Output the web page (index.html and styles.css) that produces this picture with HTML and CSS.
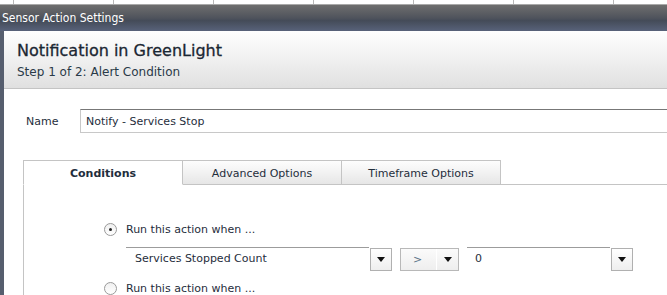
FILE: index.html
```html
<!DOCTYPE html>
<html>
<head>
    <title>Sensor Action Settings</title>
    <link rel="stylesheet" href="styles.css">
</head>
<body>
    <div class="grid-strip">
        <div class="cell first"></div>
        <div class="cell"></div>
        <div class="cell"></div>
        <div class="cell"></div>
        <div class="cell"></div>
        <div class="cell"></div>
        <div class="cell"></div>
    </div>
    <div class="titlebar">Sensor Action Settings</div>
    <div class="window">
        <div class="header">
            <h1>Notification in GreenLight</h1>
            <div class="step">Step 1 of 2: Alert Condition</div>
        </div>
        <div class="name-row">
            <label for="name">Name</label>
            <input type="text" id="name" value="Notify - Services Stop" />
        </div>
        <div class="tabs">
            <div class="tab active">Conditions</div>
            <div class="tab">Advanced Options</div>
            <div class="tab">Timeframe Options</div>
            <div class="tab-rest"></div>
        </div>
        <div class="tab-body">
            <div class="radio-row">
                <span class="radio checked"></span>
                <span>Run this action when ...</span>
            </div>
            <div class="cond-row">
                <div class="combo metric">
                    <span class="combo-text">Services Stopped Count</span>
                </div>
                <div class="arrow-btn"><span class="tri"></span></div>
                <div class="op-select">
                    <span class="op-text">&gt;</span>
                    <span class="op-arrow"><span class="tri"></span></span>
                </div>
                <div class="combo value">
                    <span class="combo-text">0</span>
                </div>
                <div class="arrow-btn"><span class="tri"></span></div>
            </div>
            <div class="radio-row">
                <span class="radio"></span>
                <span>Run this action when ...</span>
            </div>
        </div>
    </div>
</body>
</html>
```

FILE: styles.css
```css
body {
    margin: 0;
    width: 667px;
    height: 295px;
    overflow: hidden;
    background-color: #fff;
    font-family: "DejaVu Sans", sans-serif;
    font-size: 11px;
    color: #1f2e3c;
}

.grid-strip {
    display: flex;
    height: 4px;
    border-bottom: 1px solid #a9a9a9;
    background-color: #fff;
}

.cell {
    flex: 0 0 99px;
    border-right: 1px solid #b8b8b8;
}

.cell.first {
    flex-basis: 13px;
}

.titlebar {
    height: 26px;
    line-height: 26px;
    padding-left: 2px;
    color: #fff;
    font-family: "DejaVu Sans Condensed", "DejaVu Sans", sans-serif;
    font-size: 12px;
    background: linear-gradient(#6e6e6e, #4f535c 50%, #444b58 60%, #58627a);
}

.window {
    border-left: 4px solid #565e6e;
    height: 264px;
    overflow: hidden;
}

.header {
    height: 58px;
    padding: 10px 0 0 13px;
    box-sizing: border-box;
    background: linear-gradient(#fefefe, #f0f0f0 50%, #e0e0e0);
    border-bottom: 1px solid #c4c4c4;
}

h1 {
    margin: 0;
    font-size: 16px;
    font-weight: normal;
    color: #1b2733;
    -webkit-text-stroke: 0.3px #1b2733;
    line-height: 20px;
}

.step {
    margin-top: 4px;
    font-size: 12px;
    color: #2a3a48;
}

.name-row {
    display: flex;
    align-items: center;
    margin-top: 20px;
    padding-left: 22px;
}

.name-row label {
    width: 54px;
}

.name-row input {
    flex: 1;
    height: 24px;
    box-sizing: border-box;
    margin-right: -20px;
    padding: 0 5px;
    border: 1px solid #c8c8c8;
    border-top-color: #777;
    font-family: inherit;
    font-size: 11px;
    color: #1f2e3c;
}

.tabs {
    display: flex;
    margin-top: 27px;
    padding-left: 19px;
}

.tab {
    width: 158px;
    height: 23px;
    line-height: 25px;
    text-align: center;
    border: 1px solid #c4c4c4;
    border-left: none;
    background: linear-gradient(#fdfdfd, #f2f2f2 50%, #e6e6e6);
    box-sizing: content-box;
}

.tab.active {
    border-left: 1px solid #c4c4c4;
    border-bottom: 1px solid #fff;
    background: #fff;
    font-weight: bold;
}

.tab-rest {
    flex: 1;
    border-bottom: 1px solid #c4c4c4;
}

.tab-body {
    margin-left: 19px;
    border-left: 1px solid #c4c4c4;
    padding: 36px 0 0 80px;
    height: 100px;
}

.radio-row {
    display: flex;
    align-items: center;
    gap: 9px;
    height: 16px;
}

.radio {
    width: 11px;
    height: 11px;
    border: 1px solid #9a9a9a;
    border-radius: 50%;
    background: linear-gradient(#f0f0f0, #fff);
    position: relative;
}

.radio.checked::after {
    content: "";
    position: absolute;
    left: 4px;
    top: 4px;
    width: 3px;
    height: 3px;
    border-radius: 50%;
    background: #222;
}

.cond-row {
    display: flex;
    align-items: flex-start;
    margin: 10px 0 10px 22px;
    height: 23px;
}

.combo {
    height: 22px;
    border-top: 1px solid #9c9c9c;
    line-height: 22px;
    padding-left: 9px;
    box-sizing: border-box;
}

.combo.metric {
    width: 243px;
}

.combo.value {
    width: 143px;
    margin-left: 8px;
    padding-left: 8px;
}

.arrow-btn {
    width: 20px;
    height: 21px;
    margin-top: 1px;
    margin-left: 1px;
    border: 1px solid #b0b0b0;
    background: linear-gradient(#fff, #eeeeee);
    display: flex;
    align-items: center;
    justify-content: center;
}

.tri {
    width: 0;
    height: 0;
    border-left: 4px solid transparent;
    border-right: 4px solid transparent;
    border-top: 5px solid #111;
}

.op-select {
    display: flex;
    width: 57px;
    height: 21px;
    margin-top: 1px;
    margin-left: 8px;
    border: 1px solid #b8b8b8;
    background: linear-gradient(#fbfbfb, #eeeeee);
}

.op-text {
    flex: 1;
    padding-left: 12px;
    line-height: 21px;
    color: #5a7388;
}

.op-arrow {
    width: 21px;
    border-left: 1px solid #fff;
    display: flex;
    align-items: center;
    justify-content: center;
}
```
